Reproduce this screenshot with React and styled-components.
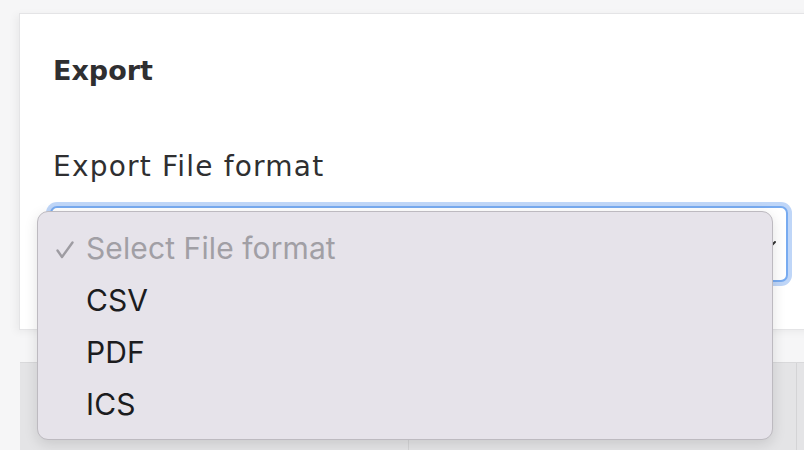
import React from "react";
import styled, { createGlobalStyle } from "styled-components";

const Global = createGlobalStyle`
  html, body { margin: 0; padding: 0; }
  body {
    background: #f6f6f7;
    overflow: hidden;
    font-family: "Inter", "Noto Sans", sans-serif;
  }
`;

const Page = styled.div`
  width: 804px;
  height: 450px;
  padding: 13px 0 0 19px;
  box-sizing: border-box;
  display: flex;
  flex-direction: column;
  overflow: hidden;
`;

const Card = styled.section`
  width: 820px;
  height: 317px;
  box-sizing: border-box;
  background: #ffffff;
  border: 1px solid #e4e4e6;
  box-shadow: -3px 2px 8px rgba(0, 0, 0, 0.05);
  padding: 41px 0 0 33px;
  flex-shrink: 0;
`;

const Title = styled.h2`
  margin: 0;
  font-family: "DejaVu Sans", sans-serif;
  font-weight: 700;
  font-size: 27px;
  line-height: 32px;
  color: #2f2f31;
  letter-spacing: 0;
`;

const Label = styled.label`
  display: block;
  margin-top: 63px;
  font-family: "DejaVu Sans", sans-serif;
  font-weight: 400;
  font-size: 28px;
  line-height: 34px;
  letter-spacing: 1.2px;
  color: #2f2f31;
`;

const SelectWrap = styled.div`
  position: relative;
  margin: 22px 0 0 -3px;
  width: 738px;
  height: 76px;
`;

const SelectBox = styled.div`
  width: 100%;
  height: 100%;
  box-sizing: border-box;
  border: 2px solid #78abf0;
  border-radius: 7px;
  box-shadow: 0 0 0 4px #bfd6f8;
  background: #fff;
  display: flex;
  align-items: center;
  justify-content: flex-end;
  padding-right: 8px;
`;

const Menu = styled.ul`
  position: absolute;
  left: -13px;
  top: 5px;
  width: 736px;
  height: 229px;
  box-sizing: border-box;
  margin: 0;
  padding: 10px 0 0 0;
  list-style: none;
  background: #e6e3ea;
  border: 1px solid #bdbac0;
  border-radius: 11px;
  box-shadow: 0 4px 14px rgba(0, 0, 0, 0.12);
`;

const Item = styled.li`
  display: flex;
  align-items: center;
  height: 52px;
  font-family: "Inter", "Noto Sans", sans-serif;
  font-size: 30px;
  letter-spacing: 0.1px;
  color: ${(p) => (p.$disabled ? "#a19fa5" : "#1c1c1e")};
`;

const CheckSlot = styled.span`
  width: 48px;
  box-sizing: border-box;
  padding: 4px 0 0 18px;
  display: flex;
  align-items: center;
`;

const CheckIcon = () => (
  <svg width="18" height="18" viewBox="0 0 18 18">
    <path
      d="M1.5 9.5 L6 16 L16.5 1.5"
      fill="none"
      stroke="#9e9ca2"
      strokeWidth="2.4"
      strokeLinecap="round"
      strokeLinejoin="round"
    />
  </svg>
);

const Panel = styled.div`
  margin-top: 32px;
  margin-left: 1px;
  flex: 1;
  display: flex;
  background: #e4e4e6;
  border-top: 1px solid #d9d9db;
`;

const Cell = styled.div`
  width: ${(p) => p.$w}px;
  flex-shrink: 0;
  border-left: ${(p) => (p.$first ? "none" : "1px solid #d4d4d6")};
`;

const Chevron = () => (
  <svg width="16" height="16" viewBox="0 0 16 16">
    <path d="M3 6l5 5 5-5" fill="none" stroke="#333" strokeWidth="2" strokeLinecap="round" />
  </svg>
);

export default function App() {
  return (
    <>
      <Global />
      <Page>
        <Card>
          <Title>Export</Title>
          <Label>Export File format</Label>
          <SelectWrap>
            <SelectBox>
              <Chevron />
            </SelectBox>
            <Menu>
              <Item $disabled>
                <CheckSlot>
                  <CheckIcon />
                </CheckSlot>
                Select File format
              </Item>
              <Item>
                <CheckSlot />CSV
              </Item>
              <Item>
                <CheckSlot />PDF
              </Item>
              <Item>
                <CheckSlot />ICS
              </Item>
            </Menu>
          </SelectWrap>
        </Card>
        <Panel>
          <Cell $first $w={388} />
          <Cell $w={387} />
          <Cell $w={40} />
        </Panel>
      </Page>
    </>
  );
}
